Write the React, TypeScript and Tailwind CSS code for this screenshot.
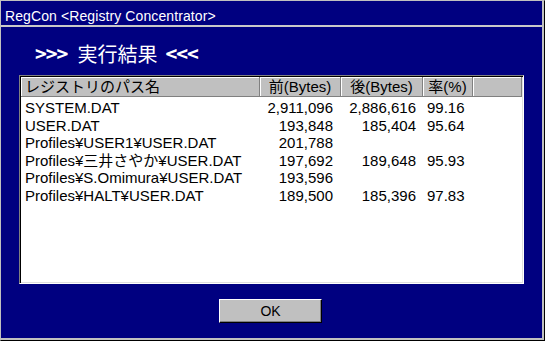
const FONT = '"Liberation Sans", "Noto Sans CJK JP", sans-serif';

type Row = {
  path: string;
  before: string;
  after: string;
  rate: string;
};

const rows: Row[] = [
  { path: "SYSTEM.DAT", before: "2,911,096", after: "2,886,616", rate: "99.16" },
  { path: "USER.DAT", before: "193,848", after: "185,404", rate: "95.64" },
  { path: "Profiles¥USER1¥USER.DAT", before: "201,788", after: "", rate: "" },
  { path: "Profiles¥三井さやか¥USER.DAT", before: "197,692", after: "189,648", rate: "95.93" },
  { path: "Profiles¥S.Omimura¥USER.DAT", before: "193,596", after: "", rate: "" },
  { path: "Profiles¥HALT¥USER.DAT", before: "189,500", after: "185,396", rate: "97.83" },
];

/* header cell look: win95 button */
const headCell =
  "h-full bg-[#c0c0c0] border-r border-r-[#808080] shadow-[inset_1px_1px_0_#ffffff] flex items-center text-black";

export default function App() {
  return (
    <div
      className="w-[545px] h-[341px] bg-[#000080] border border-t-[#c0c0c0] border-l-[#c0c0c0] border-r-black border-b-black"
      style={{ fontFamily: FONT }}
    >
      <div className="h-full flex flex-col border-r-2 border-b-2 border-[#c0c0c0]">
        {/* title */}
        <div className="h-[24px] pt-[7px] pl-[4px] text-white text-[14px] leading-[16px] whitespace-nowrap tracking-[0.1px]">
          RegCon &lt;Registry Concentrator&gt;
        </div>
        <div className="h-[2px] bg-[#c8c8c8]" />

        {/* heading */}
        <div
          className="mt-[15px] ml-[34px] flex items-center text-white text-[20px] leading-[24px] whitespace-nowrap"
          style={{ fontFamily: '"Noto Sans CJK JP", sans-serif' }}
        >
          <span className="font-bold tracking-[-1px]">&gt;&gt;&gt;</span>
          <span className="ml-[10px]">実行結果</span>
          <span className="ml-[8px] font-bold tracking-[-1px]">&lt;&lt;&lt;</span>
        </div>

        {/* list */}
        <div className="mt-[9px] ml-[18px] w-[505px] h-[209px] bg-white border border-t-[#808080] border-l-[#808080] border-b-white border-r-white shadow-[inset_1px_1px_0_#000000,inset_-1px_-1px_0_#dfdfdf] p-[1px]">
          <div className="flex h-[20px] border-b border-b-[#808080] text-[15px] leading-[18px] whitespace-nowrap">
            <div className={`${headCell} w-[239px] pl-[4px]`}>レジストリのパス名</div>
            <div className={`${headCell} w-[81px] justify-center`}>前(Bytes)</div>
            <div className={`${headCell} w-[82px] justify-center`}>後(Bytes)</div>
            <div className={`${headCell} w-[50px] justify-center`}>率(%)</div>
            <div className={`${headCell} w-[49px]`} />
          </div>

          <div className="pt-[2px] text-[15px] leading-[17.6px] text-black whitespace-nowrap">
            {rows.map((r) => (
              <div key={r.path} className="flex h-[17.6px]">
                <div className="w-[239px] pl-[4px]">{r.path}</div>
                <div className="w-[81px] pr-[8px] text-right">{r.before}</div>
                <div className="w-[82px] pr-[7px] text-right">{r.after}</div>
                <div className="w-[50px] pl-[4px]">{r.rate}</div>
              </div>
            ))}
          </div>
        </div>

        {/* button */}
        <button className="mt-[15px] ml-[218px] w-[103px] h-[24px] bg-[#c0c0c0] border border-t-white border-l-white border-r-black border-b-black shadow-[inset_-1px_-1px_0_#808080] text-[14px] leading-[16px] text-black">
          OK
        </button>
      </div>
    </div>
  );
}
